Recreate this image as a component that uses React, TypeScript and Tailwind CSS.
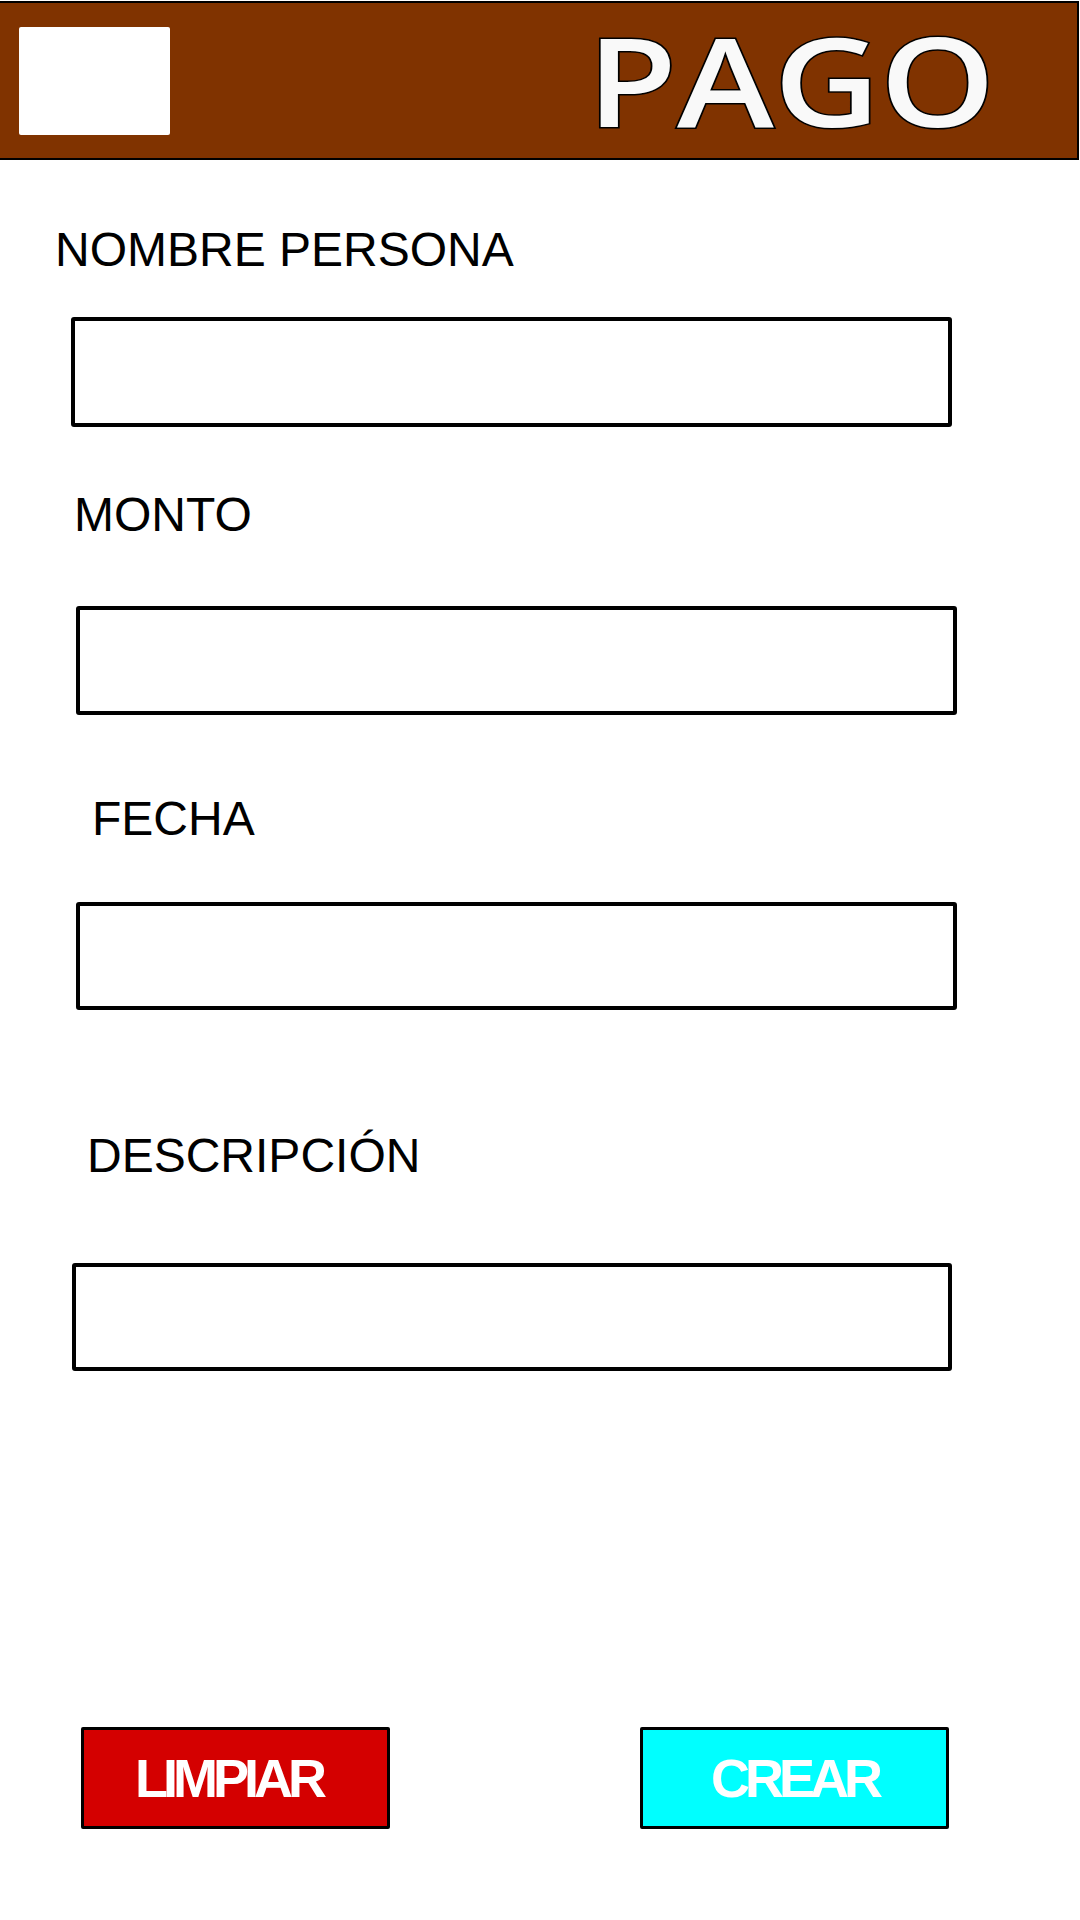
import React from "react";

const Label = ({ text, className }: { text: string; className: string }) => (
  <div className={`text-[48px] leading-none text-black whitespace-nowrap ${className}`}>{text}</div>
);

const Box = ({ className }: { className: string }) => (
  <div className={`border-4 border-black rounded-[3px] bg-white ${className}`} />
);

export default function App() {
  return (
    <div className="w-[1080px] h-[1920px] bg-white overflow-hidden font-['Liberation_Sans',Arial,sans-serif] flex flex-col">
      <header className="mt-[1px] h-[159px] w-[1079px] border-t-2 border-b-2 border-r-2 border-black bg-[#803300] flex items-start shrink-0">
        <div className="ml-[19px] mt-[24px] w-[151px] h-[108px] bg-white rounded-[2px] shrink-0" />
        <div className="ml-[417px] mt-[15px] inline-block origin-left scale-x-[1.19] text-[123px] leading-none font-semibold text-[#f9f9f9] font-['Open_Sans',sans-serif] [-webkit-text-stroke:3px_black] [paint-order:stroke_fill] whitespace-nowrap">
          PAGO
        </div>
      </header>

      <Label text="NOMBRE PERSONA" className="mt-[66px] ml-[55px]" />
      <Box className="mt-[43px] ml-[71px] w-[881px] h-[110px]" />

      <Label text="MONTO" className="mt-[64px] ml-[74px]" />
      <Box className="mt-[67px] ml-[76px] w-[881px] h-[109px]" />

      <Label text="FECHA" className="mt-[80px] ml-[92px]" />
      <Box className="mt-[59px] ml-[76px] w-[881px] h-[108px]" />

      <Label text="DESCRIPCIÓN" className="mt-[122px] ml-[87px]" />
      <Box className="mt-[83px] ml-[72px] w-[880px] h-[108px]" />

      <div className="mt-[356px] flex">
        <button className="ml-[81px] w-[309px] h-[102px] pr-[14px] bg-[#d40000] border-[3px] border-black rounded-[2px] flex items-center justify-center text-white font-bold text-[54px] leading-none tracking-[-5px]">
          LIMPIAR
        </button>
        <button className="ml-[250px] w-[309px] h-[102px] bg-[#00ffff] border-[3px] border-black rounded-[2px] flex items-center justify-center text-white font-bold text-[54px] leading-none tracking-[-5px]">
          CREAR
        </button>
      </div>
    </div>
  );
}
